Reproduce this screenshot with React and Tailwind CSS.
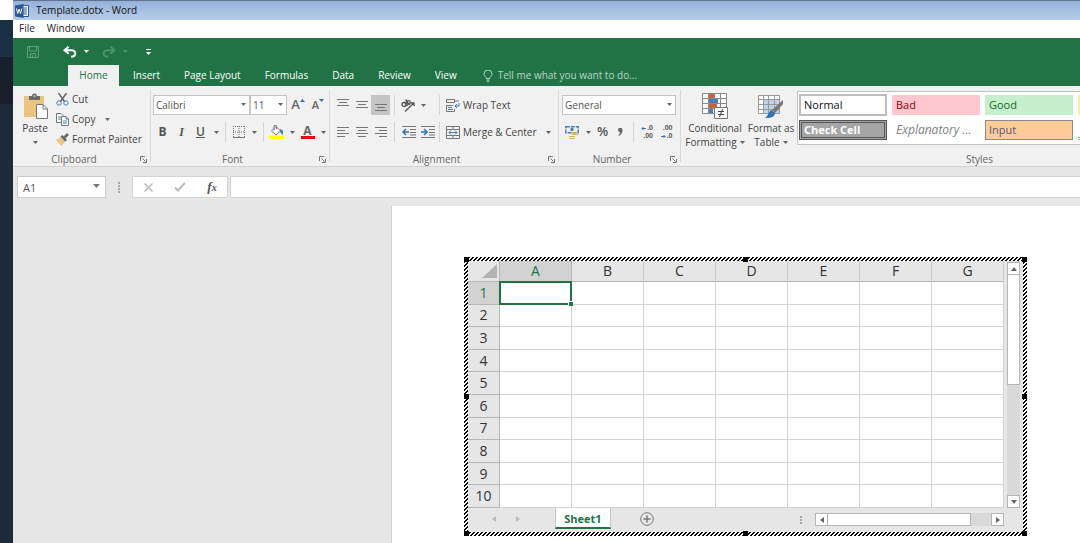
const columns = ['A', 'B', 'C', 'D', 'E', 'F', 'G'];
const rows = [1, 2, 3, 4, 5, 6, 7, 8, 9, 10];
const tabs = ['Insert', 'Page Layout', 'Formulas', 'Data', 'Review', 'View'];

const handles = [
  'left-0 top-0',
  'left-1/2 -ml-[3px] top-0',
  'right-0 top-0',
  'left-0 top-1/2 -mt-[3px]',
  'right-0 top-1/2 -mt-[3px]',
  'left-0 bottom-0',
  'left-1/2 -ml-[3px] bottom-0',
  'right-0 bottom-0',
];

function Caret({ className = 'text-[#666]' }) {
  return (
    <svg className={`w-[5px] h-[3px] shrink-0 ${className}`} viewBox="0 0 5 3" fill="currentColor"><path d="M0 0h5L2.5 3z" /></svg>
  );
}

function CaretButton({ label, className }) {
  return (
    <button aria-label={label} className="w-3 h-5 flex items-center justify-center"><Caret className={className} /></button>
  );
}

function Tool({ label, children, className = 'w-5' }) {
  return (
    <button aria-label={label} className={`h-5 shrink-0 flex items-center justify-center ${className}`}>{children}</button>
  );
}

function Divider({ className = 'mx-[3px]' }) {
  return <div className={`w-px h-5 shrink-0 bg-[#d5d5d5] ${className}`} />;
}

function Launcher({ label }) {
  return (
    <button aria-label={label} className="absolute right-1 bottom-[3px]">
      <svg className="w-[7px] h-[7px]" viewBox="0 0 7 7" fill="none" stroke="#777"><path d="M.5 5V.5H5M2.5 2.5l3 3M6.5 3v3.5H3" /></svg>
    </button>
  );
}

function Group({ name, launcher = true, className, children }) {
  return (
    <section aria-label={name} className={`relative shrink-0 h-20 flex flex-col ${className}`}>
      <div className="flex-1">{children}</div>
      <div className={`h-[14px] text-center leading-[14px] text-[#666] ${launcher ? 'pr-4' : ''}`}>{name}</div>
      {launcher && <Launcher label={`${name} settings`} />}
      <div className="absolute right-0 top-1 bottom-1 w-px bg-[#d8d8d8]" />
    </section>
  );
}

function Select({ label, value, className }) {
  return (
    <label className={`relative block h-5 ${className}`}>
      <select aria-label={label} defaultValue={value} className="appearance-none block w-full h-5 pl-0.5 bg-white border border-[#c6c6c6] leading-[18px] text-[#555] outline-none">
        <option>{value}</option>
      </select>
      <span className="absolute right-1 top-2 pointer-events-none"><Caret className="block text-[#666]" /></span>
    </label>
  );
}

function Lines({ d }) {
  return (
    <svg className="w-3 h-3" viewBox="0 0 12 12" fill="none" stroke="#777"><path d={d} /></svg>
  );
}

function TitleBar() {
  return (
    <header className="h-5 flex items-center gap-[7px] pl-0.5 border-t border-[#60718b] bg-linear-to-b from-[#93b2da] to-[#b7cde8] text-[#111]">
      <svg className="w-[14px] h-[14px]" viewBox="0 0 14 14">
        <path d="M7 1.5h6.5v11H7z" fill="#fff" stroke="#2b579a" />
        <path d="M8 4h4M8 6h4M8 8h4M8 10h4" stroke="#2b579a" />
        <path d="M0 1.500 8.500 0v14L0 12.500z" fill="#2b579a" />
        <path d="m1.500 4.500 1.200 5L4.200 5l1.300 4.500 1.300-5" fill="none" stroke="#fff" />
      </svg>
      <h1>Template.dotx - Word</h1>
    </header>
  );
}

function QuickAccess() {
  return (
    <div className="h-[27px] flex items-center pl-2.5 text-white">
      <Tool label="Save">
        <svg className="w-3 h-3" viewBox="0 0 12 12" fill="none" stroke="#5f9f79"><path d="M.5.5h11v11H.5zM2.500.5v4.500h7V.5M3.500 11.500v-4h5v4M5.500 9v2" /></svg>
      </Tool>
      <Tool label="Undo" className="w-5 ml-[17px]">
        <svg className="w-[14px] h-3" viewBox="0 0 14 12" fill="none" stroke="currentColor" strokeWidth="2"><path d="M5.500.7 1.500 4.200l4.200 3.500M2 4.200h6.500c5 0 5.300 6.300-.5 6.500" /></svg>
      </Tool>
      <CaretButton label="Undo list" className="text-white" />
      <Tool label="Redo" className="w-5 ml-[7px]">
        <svg className="w-[14px] h-3" viewBox="0 0 14 12" fill="none" stroke="#4a9168" strokeWidth="2"><path d="M8.500.7l4 3.500-4.200 3.500M12 4.200H5.500c-5 0-5.300 6.300.5 6.500" /></svg>
      </Tool>
      <CaretButton label="Redo list" className="text-[#4a9168]" />
      <Tool label="Customize toolbar" className="w-5 ml-[7px]">
        <svg className="w-[5px] h-[6px]" viewBox="0 0 5 6"><path d="M0 .5h5" stroke="currentColor" /><path d="M0 3h5L2.500 6z" fill="currentColor" /></svg>
      </Tool>
    </div>
  );
}

function TabStrip() {
  return (
    <nav className="h-[21px] flex items-center pl-[55px] text-white whitespace-nowrap">
      <button className="h-[21px] w-[51px] bg-[#f1f1f1] text-[#217346]">Home</button>
      <div className="flex gap-6 ml-[14px]">
        {tabs.map(tab => <button key={tab}>{tab}</button>)}
      </div>
      <label className="flex items-center gap-[5px] ml-[26px]">
        <svg className="w-[10px] h-3" viewBox="0 0 10 12" fill="none" stroke="#b9d6c6"><path d="M3.500 8.500C3.500 7 1 6.500 1 4a4 4 0 0 1 8 0c0 2.500-2.500 3-2.500 4.500zM3.500 10h3M4 11.500h2" /></svg>
        <input aria-label="Tell me what you want to do" placeholder="Tell me what you want to do..." className="w-40 bg-transparent outline-none placeholder:text-[#b9d6c6]" />
      </label>
    </nav>
  );
}

function Clipboard() {
  return (
    <Group name="Clipboard" className="w-[138px]">
      <div className="flex pt-[3px] pl-[9px]">
        <button className="w-[26px] flex flex-col items-center pt-1">
          <svg className="w-[26px] h-[26px]" viewBox="0 0 26 26">
            <path d="M2 3h20v21H2z" fill="#ebc57f" />
            <path d="M7 3h3a2.500 2.500 0 0 1 5 0h3v4H7z" fill="#6b6b6b" />
            <path d="M11.500 3h2" stroke="#fff" />
            <path d="M14.500 11.500H21l4.500 4.500v9.500h-11z" fill="#fff" stroke="#777" />
            <path d="M21 11.500V16h4.500" fill="none" stroke="#777" />
          </svg>
          <span className="leading-[14px] mt-0.5">Paste</span>
          <span className="mt-1.5"><Caret className="block text-[#666]" /></span>
        </button>
        <div className="ml-2 flex flex-col">
          <button className="h-5 flex items-center gap-[3px]">
            <svg className="w-[13px] h-[13px]" viewBox="0 0 13 13" fill="none"><path d="m2.500 0 6 8.500M10.500 0l-6 8.500" stroke="#666" strokeWidth="1.500" /><circle cx="3" cy="10" r="2.200" stroke="#4a7ebb" /><circle cx="10" cy="10" r="2.200" stroke="#4a7ebb" /></svg>
            Cut
          </button>
          <div className="flex items-center">
            <button className="h-5 flex items-center gap-[3px]">
              <svg className="w-[13px] h-[13px]" viewBox="0 0 13 13" fill="#fff" stroke="#6d7885"><path d="M.5.5h4.500l2 2v7H.5zM2 4h3M2 6h3" /><path d="M5.500 3.500H10l2.500 2.500v6.500h-7zM10 3.500V6h2.500" /><path d="M7 8h4M7 10h4" stroke="#4a7ebb" /></svg>
              Copy
            </button>
            <span className="ml-1.5 flex"><CaretButton label="Copy options" /></span>
          </div>
          <button className="h-5 flex items-center gap-[3px] whitespace-nowrap">
            <svg className="w-[13px] h-[13px]" viewBox="0 0 13 13"><path d="m0 7 5-3 4 4.500L5.500 13z" fill="#ebc57f" /><path d="m4.500 3.500 2-1.500L11 7 9 8.500z" fill="#666" /><path d="m8.500 4.500 3.500-3.500" stroke="#666" strokeWidth="2.500" /></svg>
            Format Painter
          </button>
        </div>
      </div>
    </Group>
  );
}

function FontGroup() {
  return (
    <Group name="Font" className="w-[179px]">
      <div className="pt-[9px] pl-0.5">
        <div className="flex">
          <Select label="Font name" value="Calibri" className="w-[97px]" />
          <Select label="Font size" value="11" className="w-[37px]" />
          <Tool label="Grow font" className="w-5 ml-px">
            <span className="text-[13px] font-semibold text-[#666]">A</span>
            <svg className="w-[5px] h-3" viewBox="0 0 5 12" fill="#3472b8"><path d="M0 3 2.500 0 5 3z" /></svg>
          </Tool>
          <Tool label="Shrink font">
            <span className="text-[11px] font-semibold text-[#666]">A</span>
            <svg className="w-[5px] h-3" viewBox="0 0 5 12" fill="#3472b8"><path d="m0 0 2.500 3L5 0z" /></svg>
          </Tool>
        </div>
        <div className="flex mt-[7px] text-[12px] text-[#555]">
          <Tool label="Bold" className="w-[19px]"><b>B</b></Tool>
          <Tool label="Italic" className="w-[19px]"><i className="font-['Liberation_Serif',serif] font-bold">I</i></Tool>
          <Tool label="Underline" className="w-[19px]"><u className="font-semibold">U</u></Tool>
          <CaretButton label="Underline styles" />
          <Divider />
          <Tool label="Borders" className="w-[19px]">
            <svg className="w-3 h-3" viewBox="0 0 12 12" fill="none" stroke="#777"><path d="M0 .5h12M.5 0v12M11.500 0v12M6 0v12M0 6h12" strokeDasharray="1 1" /><path d="M0 11.500h12" /></svg>
          </Tool>
          <CaretButton label="Border styles" />
          <Divider className="ml-[3px] mr-0.5" />
          <Tool label="Fill color">
            <svg className="w-[15px] h-[14px]" viewBox="0 0 15 14" fill="none"><path d="m7 1.500 4.500 4.500L7 10 2.500 6z" fill="#fff" stroke="#777" /><path d="M5 5V1.500a1.300 1.300 0 0 1 2.600 0V4" stroke="#666" /><path d="M11 4c4 1 3.500 4 2.500 6L11 7z" fill="#4a7ebb" /><path d="M0 10.500h15V14H0z" fill="#ff0" /></svg>
          </Tool>
          <CaretButton label="Fill colors" />
          <Tool label="Font color" className="w-[19px]">
            <span className="flex flex-col items-center"><span className="text-[12px] leading-[10px] font-bold text-[#666]">A</span><span className="w-[14px] h-[3px] bg-[#e80d0d]" /></span>
          </Tool>
          <CaretButton label="Font colors" />
        </div>
      </div>
    </Group>
  );
}

function Alignment() {
  return (
    <Group name="Alignment" className="w-[229px]">
      <div className="pt-[9px] pl-[3px]">
        <div className="flex">
          <Tool label="Top align" className="w-[19px]"><Lines d="M0 .5h12M2 3.500h8M0 6.500h12" /></Tool>
          <Tool label="Middle align" className="w-[19px]"><Lines d="M0 2.500h12M2 5.500h8M0 8.500h12" /></Tool>
          <Tool label="Bottom align" className="w-[19px] bg-[#c5c5c5]"><Lines d="M0 5.500h12M2 8.500h8M0 11.500h12" /></Tool>
          <Divider className="mx-1" />
          <Tool label="Orientation" className="w-[18px]">
            <svg className="w-[14px] h-[13px]" viewBox="0 0 14 13" fill="none" stroke="#555" strokeWidth="1.300"><circle cx="3" cy="5.500" r="2" /><path d="m3.500 3 3 4" /><path d="m4.500.5 4 5.500" /><circle cx="7.500" cy="3.500" r="1.800" /><path d="M4 12.500 13 4M10 4h3v3" /></svg>
          </Tool>
          <CaretButton label="Orientation options" />
          <Divider className="ml-[10px] mr-[6px]" />
          <button className="flex items-center gap-[3px] whitespace-nowrap">
            <svg className="w-[14px] h-[13px]" viewBox="0 0 14 13" fill="none" stroke="#777"><path d="M.5.5h8v3h-8zM.5 6.500h6M.5 6v6.500h8V10M8 2h5" /><path d="M2 8.500h4M2 10.500h5M13 4v3H9M11 5 9 7l2 2" stroke="#4a7ebb" /></svg>
            Wrap Text
          </button>
        </div>
        <div className="flex mt-[7px]">
          <Tool label="Align left" className="w-[19px]"><Lines d="M0 1.500h12M0 4.500h8M0 7.500h12M0 10.500h8" /></Tool>
          <Tool label="Center" className="w-[19px]"><Lines d="M0 1.500h12M2 4.500h8M0 7.500h12M2 10.500h8" /></Tool>
          <Tool label="Align right" className="w-[19px]"><Lines d="M0 1.500h12M4 4.500h8M0 7.500h12M4 10.500h8" /></Tool>
          <Divider className="mx-1" />
          <Tool label="Decrease indent" className="w-[19px]">
            <svg className="w-[14px] h-3" viewBox="0 0 14 12" fill="none" stroke="#777"><path d="M0 .5h14M8 3.500h6M8 6.500h6M0 11.500h14M8 9h6" /><path d="M7 6H1M4 3 1 6l3 3" stroke="#3472b8" strokeWidth="1.500" /></svg>
          </Tool>
          <Tool label="Increase indent" className="w-[19px]">
            <svg className="w-[14px] h-3" viewBox="0 0 14 12" fill="none" stroke="#777"><path d="M0 .5h14M8 3.500h6M8 6.500h6M0 11.500h14M8 9h6" /><path d="M0 6h6M3 3l3 3-3 3" stroke="#3472b8" strokeWidth="1.500" /></svg>
          </Tool>
          <Divider className="ml-0.5 mr-[6px]" />
          <button className="flex items-center gap-[3px] whitespace-nowrap">
            <svg className="w-[14px] h-[13px]" viewBox="0 0 14 13" fill="none" stroke="#777"><path d="M.5.5h13v12H.5zM.5 3.500h13M.5 9.500h13M7 .5v3M7 9.500v3" /><path d="M3 6.500h8M5 4.500l-2 2 2 2M9 4.500l2 2-2 2" stroke="#4a7ebb" /></svg>
            Merge &amp; Center
          </button>
          <span className="ml-1.5"><CaretButton label="Merge options" /></span>
        </div>
      </div>
    </Group>
  );
}

function NumberGroup() {
  return (
    <Group name="Number" className="w-[122px]">
      <div className="pt-[9px] pl-[3px] pr-[5px]">
        <Select label="Number format" value="General" className="w-full" />
        <div className="flex mt-[7px] text-[#555]">
          <Tool label="Accounting format">
            <svg className="w-[14px] h-[14px]" viewBox="0 0 14 14" fill="none"><path d="M.8 1.800h12.400v6H.8z" stroke="#4a7ebb" strokeWidth="1.500" strokeDasharray="4 1" /><circle cx="7" cy="4.500" r="1.700" fill="#4a7ebb" /><path d="M7 7.500h6M7 9.500h6M4 11.500h6M4 13.500h6" stroke="#e3ad57" /></svg>
          </Tool>
          <CaretButton label="Currencies" />
          <Tool label="Percent style" className="w-[17px]"><span className="text-[13px] font-semibold">%</span></Tool>
          <Tool label="Comma style" className="w-[19px]"><svg className="w-[5px] h-2" viewBox="0 0 5 8"><path d="M0 2a2 2 0 0 1 4.500 0C4.500 5 3 7 .8 8L.5 7c1-.7 1.500-1.700 1.500-3A2 2 0 0 1 0 2z" fill="#666" /></svg></Tool>
          <Divider />
          <Tool label="Increase decimal">
            <span className="relative w-3 flex flex-col items-end font-['Liberation_Sans',sans-serif] text-[7px] leading-[8px] font-bold"><span>.0</span><span>.00</span>
              <svg className="absolute left-0 top-0 w-[5px] h-[7px]" viewBox="0 0 5 7" fill="none" stroke="#3472b8"><path d="M5 4.500H1M2.500 3 1 4.500 2.500 6" /></svg>
            </span>
          </Tool>
          <Tool label="Decrease decimal" className="w-[19px]">
            <span className="relative w-3 flex flex-col items-end font-['Liberation_Sans',sans-serif] text-[7px] leading-[8px] font-bold"><span>.00</span><span>.0</span>
              <svg className="absolute left-0 bottom-0 w-[5px] h-[7px]" viewBox="0 0 5 7" fill="none" stroke="#3472b8"><path d="M0 3.500h4M2.500 2 4 3.500 2.500 5" /></svg>
            </span>
          </Tool>
        </div>
      </div>
    </Group>
  );
}

function Styles() {
  return (
    <Group name="Styles" launcher={false} className="w-[597px]">
      <div className="flex pt-[5px] pl-1 whitespace-nowrap">
        <button className="w-[60px] pt-0.5 flex flex-col items-center leading-[14px]">
          <svg className="w-[26px] h-[26px]" viewBox="0 0 26 26" fill="none">
            <path d="M.5.5h24v20H.5z" fill="#fff" />
            <path d="M7 1h6v5H7zM7 11h8v5H7z" fill="#d1603d" />
            <path d="M7 6h9v5H7zM7 16h4v5H7z" fill="#4a7ebb" />
            <path d="M.5.5h24v20H.5zM6.500.5v20M18.500.5v20M12.500.5v5M.5 5.500h24M.5 10.500h24M.5 15.500h24" stroke="#8a8a8a" />
            <path d="M12.500 14.500h13v11h-13z" fill="#fff" stroke="#777" />
            <path d="M16 18.500h6M16 21.500h6M20.500 16l-3 8" stroke="#444" />
          </svg>
          <span className="mt-0.5">Conditional</span>
          <span className="flex items-center gap-[3px]">Formatting <Caret /></span>
        </button>
        <button className="w-[50px] ml-px pt-0.5 flex flex-col items-center leading-[14px]">
          <svg className="w-[26px] h-[26px]" viewBox="0 0 26 26" fill="none">
            <path d="M.5 2.500h21v18H.5z" fill="#fff" />
            <path d="M6 7h15v13H6z" fill="#bdd3ea" />
            <path d="M.5 2.500h21v18H.5zM5.500 2.500v18M10.500 2.500v18M16.500 2.500v18M.5 6.500h21M.5 11.500h21M.5 16.500h21" stroke="#999" />
            <path d="M25 7v4l-8 9-3-3z" fill="#777" />
            <path d="m13.500 17 3.500 3.500c-1 4-5 5-10 4.500 3-1.500 3-6 6.500-8z" fill="#3472b8" />
          </svg>
          <span className="mt-0.5">Format as</span>
          <span className="flex items-center gap-[3px]">Table <Caret /></span>
        </button>
        <div className="w-[480px] h-[54px] ml-px border border-[#c3c3c3] bg-white pl-px pt-0.5 grid grid-cols-[repeat(5,88px)] gap-x-[5px] grid-rows-[22px_20px] gap-y-1 text-[11px] text-left">
          <button className="text-left pl-[3px] border-2 border-[#bdbdbd] text-[#111]">Normal</button>
          <button className="text-left pl-1 my-px bg-[#ffc7ce] text-[#9c0006]">Bad</button>
          <button className="text-left pl-1 my-px bg-[#c6efce] text-[#176b1c]">Good</button>
          <button aria-label="Neutral" className="my-px bg-[#ffeb9c]" />
          <span />
          <button className="text-left pl-0.5 border-3 border-double border-[#555] bg-[#a5a5a5] font-bold text-white leading-[14px]">Check Cell</button>
          <button className="text-left pl-1 italic text-[12px] leading-[18px] text-[#7f7f7f]">Explanatory ...</button>
          <button className="text-left pl-[3px] border border-[#8a8a8a] bg-[#ffcc99] text-[#55557a]">Input</button>
          <button aria-label="Linked cell" className="border-b-3 border-double border-[#e8a24c]" />
        </div>
      </div>
    </Group>
  );
}

function FormulaBar() {
  return (
    <div className="h-10 pt-[9px] pl-1 flex items-start border-t border-[#d4d4d4] bg-[#e6e6e6]">
      <label className="relative shrink-0">
        <input aria-label="Name box" defaultValue="A1" className="block w-[89px] h-[22px] px-[5px] border border-[#cbcbcb] bg-white text-[11px] text-[#555] outline-none" />
        <svg className="absolute right-[6px] top-2 w-[7px] h-1" viewBox="0 0 7 4" fill="#777"><path d="M0 0h7L3.500 4z" /></svg>
      </label>
      <svg className="mx-3 mt-[6px] w-0.5 h-[11px] shrink-0" viewBox="0 0 2 11" fill="#aaa"><path d="M0 0h2v2H0zM0 3h2v2H0zM0 6h2v2H0zM0 9h2v2H0z" /></svg>
      <div className="w-[96px] h-[22px] shrink-0 flex items-center justify-between px-[5px] border border-[#d4d4d4] bg-white">
        <Tool label="Cancel"><svg className="w-[9px] h-[9px]" viewBox="0 0 9 9" fill="none" stroke="#bbb" strokeWidth="1.500"><path d="m.5.500 8 8M8.500.5l-8 8" /></svg></Tool>
        <Tool label="Enter"><svg className="w-3 h-[10px]" viewBox="0 0 12 10" fill="none" stroke="#bbb" strokeWidth="2"><path d="m1 5.500 3 3L11 .8" /></svg></Tool>
        <Tool label="Insert function"><i className="font-['Liberation_Serif',serif] font-bold text-[13px] text-[#555]">f<span className="text-[10px]">x</span></i></Tool>
      </div>
      <input aria-label="Formula" className="ml-0.5 flex-1 min-w-0 h-[22px] px-1 border border-r-0 border-[#d4d4d4] bg-white outline-none" />
    </div>
  );
}

function ScrollArrow({ label, d, className }) {
  return (
    <button aria-label={label} className={`shrink-0 flex items-center justify-center border border-[#b5b5b5] bg-white ${className}`}>
      <svg className="w-[6px] h-[6px]" viewBox="0 0 6 6" fill="#666"><path d={d} /></svg>
    </button>
  );
}

function Grid() {
  return (
    <table className="w-full h-[247px] table-fixed border-separate border-spacing-0 text-[14px] leading-[18px] text-[#333]">
      <thead>
        <tr className="h-[21px]">
          <th aria-label="Select all" className="w-8 p-0 border-r border-b border-[#b5b5b5]">
            <svg className="w-[15px] h-[14px] ml-auto mr-0.5" viewBox="0 0 15 14"><path d="M15 0v14H0z" fill="#b3b3b3" /></svg>
          </th>
          {columns.map(col => (
            <th key={col} scope="col" className={`p-0 font-normal border-r border-b ${col === 'A' ? 'bg-[#d2d2d2] text-[#217346] border-[#b5b5b5] border-b-[#217346]' : 'border-r-[#c9c9c9] border-b-[#b5b5b5]'}`}>{col}</th>
          ))}
        </tr>
      </thead>
      <tbody>
        {rows.map(row => (
          <tr key={row}>
            <th scope="row" className={`p-0 font-normal border-r border-b border-[#b5b5b5] ${row === 1 ? 'bg-[#d2d2d2] text-[#217346]' : ''}`}>{row}</th>
            {columns.map(col => (
              <td key={col} className="relative p-0 bg-white border-r border-b border-[#d4d4d4]">
                {row === 1 && col === 'A' && (
                  <div className="absolute -inset-px z-10 border-2 border-[#217346]">
                    <span className="absolute -right-[3px] -bottom-[3px] w-[5px] h-[5px] bg-[#217346] border-t border-l border-white" />
                  </div>
                )}
              </td>
            ))}
          </tr>
        ))}
      </tbody>
    </table>
  );
}

function Workbook() {
  return (
    <div className="relative p-1 bg-[linear-gradient(135deg,#000_25%,#fff_25%,#fff_50%,#000_50%,#000_75%,#fff_75%)] bg-size-[4px_4px]">
      {handles.map(pos => <span key={pos} className={`absolute w-[5px] h-[5px] bg-black ${pos}`} />)}
      <div className="bg-[#e6e6e6]">
        <div className="flex">
          <div className="flex-1"><Grid /></div>
          <div className="w-[13px] mx-[3px] pt-px flex flex-col bg-[#d9d9d9]">
            <ScrollArrow label="Scroll up" d="M0 5h6L3 1z" className="h-[13px]" />
            <div className="h-[110px] border border-t-0 border-[#b5b5b5] bg-white" />
            <ScrollArrow label="Scroll down" d="M0 1h6L3 5z" className="h-[13px] mt-auto" />
          </div>
        </div>
        <div className="h-6 flex items-start">
          <div className="w-[87px] h-[22px] flex items-center gap-5 pl-6">
            <button aria-label="Previous sheet"><svg className="block w-1 h-[6px]" viewBox="0 0 4 6" fill="#bbb"><path d="M4 0v6L0 3z" /></svg></button>
            <button aria-label="Next sheet"><svg className="block w-1 h-[6px]" viewBox="0 0 4 6" fill="#bbb"><path d="M0 0v6l4-3z" /></svg></button>
          </div>
          <button className="w-14 h-[21px] pt-0.5 bg-white border-x border-b-2 border-x-[#c5c5c5] border-b-[#217346] font-bold text-[11px] leading-[17px] text-[#217346]">Sheet1</button>
          <button aria-label="New sheet" className="ml-[29px] mt-1">
            <svg className="block w-[14px] h-[14px]" viewBox="0 0 14 14" fill="none" stroke="#777"><circle cx="7" cy="7" r="6.300" /><path d="M7 3.500v7M3.500 7h7" strokeWidth="1.500" /></svg>
          </button>
          <svg className="ml-auto mr-[13px] mt-2 w-0.5 h-2" viewBox="0 0 2 8" fill="#aaa"><path d="M0 0h2v2H0zM0 3h2v2H0zM0 6h2v2H0z" /></svg>
          <div className="w-[34%] h-[13px] mt-[5px] mr-[19px] flex bg-[#d9d9d9]">
            <ScrollArrow label="Scroll left" d="M5 0v6L1 3z" className="w-[13px]" />
            <div className="flex-1 mr-5 border border-l-0 border-[#b5b5b5] bg-white" />
            <ScrollArrow label="Scroll right" d="M1 0v6l4-3z" className="w-[13px]" />
          </div>
        </div>
      </div>
    </div>
  );
}

export default function App() {
  return (
    <div className="flex h-screen overflow-hidden bg-[#e6e6e6] font-['Open_Sans',sans-serif] text-[10px] text-[#444]">
      <aside className="w-[13px] shrink-0 flex flex-col">
        <div className="h-5 bg-white" />
        <div className="h-[37px] bg-[#1b2f42]" />
        <div className="h-[47px] bg-[#181e2b]" />
        <div className="flex-1 bg-[#1d2c39]" />
      </aside>
      <div className="flex-1 min-w-0 flex flex-col">
        <TitleBar />
        <nav className="h-[18px] shrink-0 flex items-center gap-3 pl-1.5 pb-0.5 bg-white text-[#222]">
          <button>File</button>
          <button>Window</button>
        </nav>
        <div className="shrink-0 bg-[#217346]">
          <QuickAccess />
          <TabStrip />
        </div>
        <div className="shrink-0 flex overflow-hidden bg-[#f1f1f1]">
          <Clipboard />
          <FontGroup />
          <Alignment />
          <NumberGroup />
          <Styles />
        </div>
        <FormulaBar />
        <main className="flex-1 flex pl-[378px]">
          <div className="flex-1 pt-[51px] pl-[72px] pr-[53px] bg-white border-l border-[#d0d0d0]">
            <Workbook />
          </div>
        </main>
      </div>
    </div>
  );
}
